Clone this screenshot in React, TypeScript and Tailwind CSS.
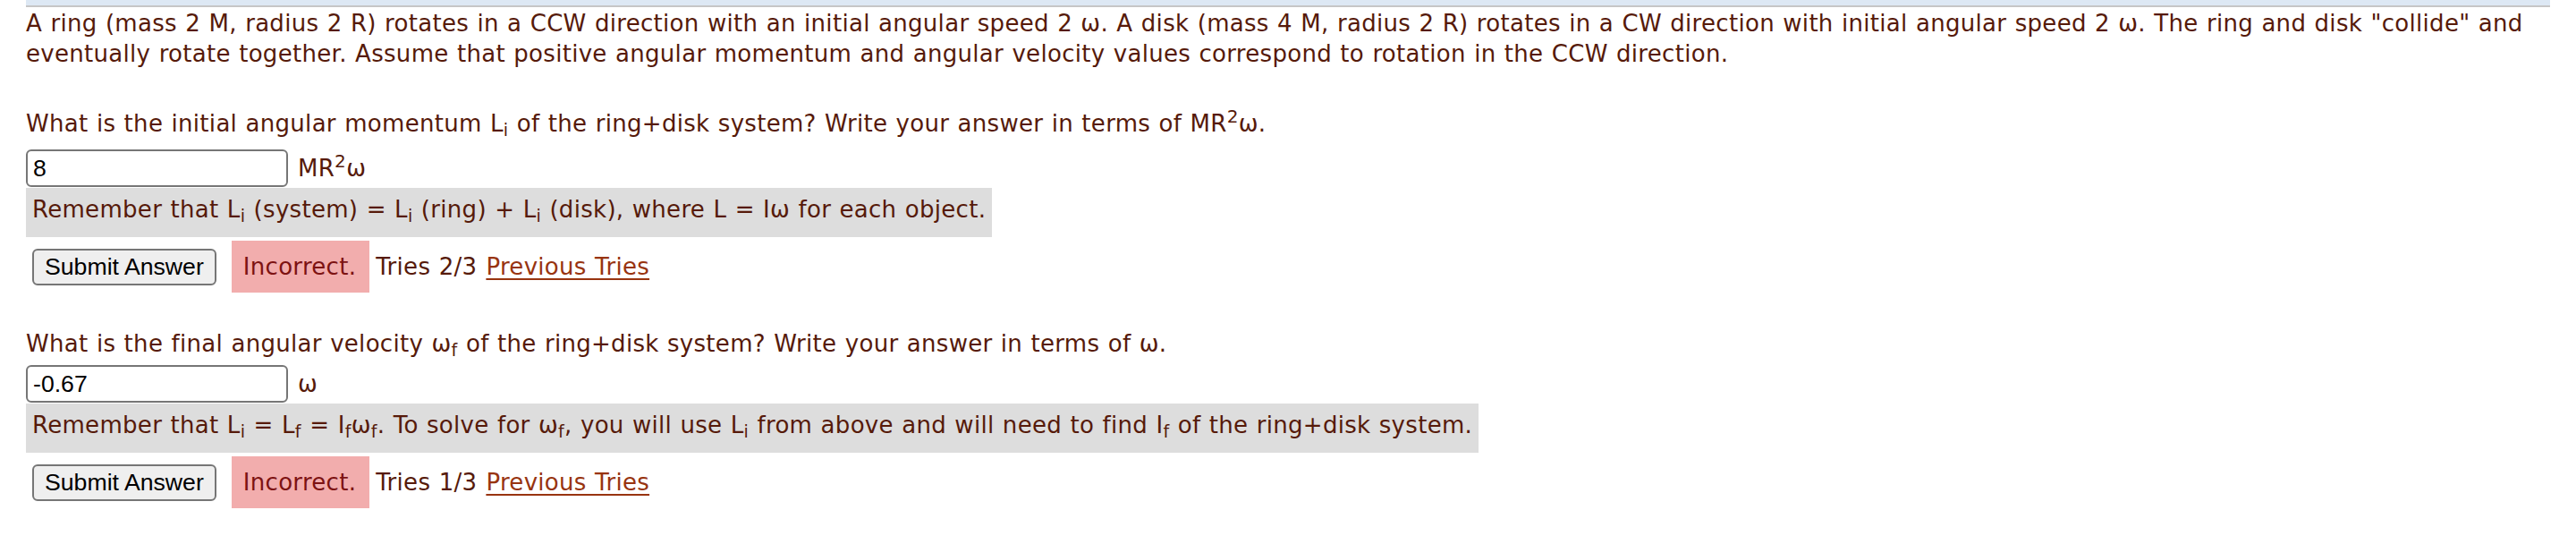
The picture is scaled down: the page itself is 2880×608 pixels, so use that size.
import React from 'react'

const inputCls =
  "w-[293px] h-[42px] border-2 border-[#767676] rounded-[6px] bg-white px-[6px] font-['Liberation_Sans',Arial,sans-serif] text-[26.67px] tracking-normal text-black outline-none"

const buttonCls =
  "h-[41px] px-[12px] border-2 border-[#767676] rounded-[6px] bg-[#efefef] font-['Liberation_Sans',Arial,sans-serif] text-[26.67px] leading-none tracking-normal [word-spacing:0px] text-black"

function Sub({ children }: { children: React.ReactNode }) {
  return <sub className="text-[19px]">{children}</sub>
}

function AnswerRow({ value, unit }: { value: string; unit: React.ReactNode }) {
  return (
    <div className="flex items-center">
      <input className={inputCls} defaultValue={value} readOnly />
      <span className="ml-[11px]">{unit}</span>
    </div>
  )
}

function Hint({ children }: { children: React.ReactNode }) {
  return (
    <div className="mt-[1px] w-fit bg-[#dddddd] px-[7px] pt-[7px] pb-[14px]">{children}</div>
  )
}

function Feedback({ tries }: { tries: string }) {
  return (
    <div className="mt-[4px] flex items-center">
      <button className={`ml-[7px] ${buttonCls}`}>Submit Answer</button>
      <span className="ml-[17px] bg-[#f2adad] pl-[13px] pr-[15px] py-[12px] text-[#7d1212]">Incorrect.</span>
      <span className="ml-[7px]">Tries {tries}</span>
      <a href="#" className="ml-[10px] text-[#983410] underline underline-offset-[4px] decoration-[2px]">
        Previous Tries
      </a>
    </div>
  )
}

export default function App() {
  return (
    <div className="min-h-[608px] bg-white px-[29px] font-['DejaVu_Sans',Verdana,sans-serif] text-[26px] leading-[34px] tracking-[0.3px] [word-spacing:0.8px] text-[#561a0a]">
      <div className="h-[8px] bg-[#dde8f4] border-b-2 border-[#c6c6c6]" />

      <p className="mt-[1px]">
        A ring (mass 2 M, radius 2 R) rotates in a CCW direction with an initial angular speed 2 ω. A disk (mass 4 M,
        radius 2 R) rotates in a CW direction with initial angular speed 2 ω. The ring and disk "collide" and eventually
        rotate together. Assume that positive angular momentum and angular velocity values correspond to rotation in the
        CCW direction.
      </p>

      <p className="mt-[44px]">
        What is the initial angular momentum L<Sub>i</Sub> of the ring+disk system? Write your answer in terms of MR
        <sup className="text-[20px]">2</sup>ω.
      </p>
      <div className="mt-[12px]">
        <AnswerRow value="8" unit={<>MR<sup className="text-[20px]">2</sup>ω</>} />
      </div>
      <Hint>
        Remember that L<Sub>i</Sub> (system) = L<Sub>i</Sub> (ring) + L<Sub>i</Sub> (disk), where L = Iω for each object.
      </Hint>
      <Feedback tries="2/3" />

      <p className="mt-[40px]">
        What is the final angular velocity ω<Sub>f</Sub> of the ring+disk system? Write your answer in terms of ω.
      </p>
      <div className="mt-[7px]">
        <AnswerRow value="-0.67" unit="ω" />
      </div>
      <Hint>
        Remember that L<Sub>i</Sub> = L<Sub>f</Sub> = I<Sub>f</Sub>ω<Sub>f</Sub>. To solve for ω<Sub>f</Sub>, you will use
        L<Sub>i</Sub> from above and will need to find I<Sub>f</Sub> of the ring+disk system.
      </Hint>
      <Feedback tries="1/3" />
    </div>
  )
}
